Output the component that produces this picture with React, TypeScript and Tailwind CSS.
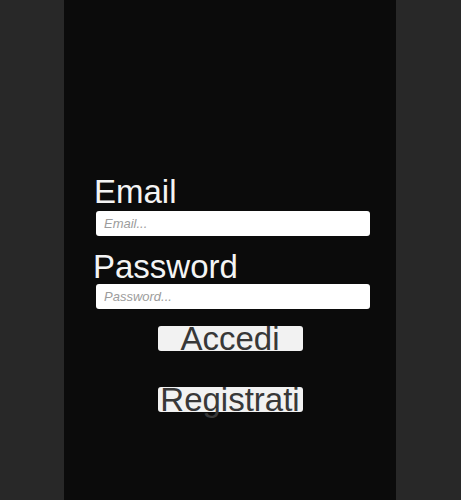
export default function App() {
  return (
    <div className="flex h-[500px] w-full bg-[#282828] font-['Liberation_Sans',Arial,sans-serif]">
      <div className="ml-[64px] flex h-full w-[332px] flex-col bg-[#0b0b0b] pt-[175px]">
        <label className="ml-[30px] text-[33px] leading-[33px] text-[#f4f4f4]">Email</label>
        <input
          type="text"
          placeholder="Email..."
          className="ml-[32px] mt-[3px] h-[25px] w-[274px] rounded-[3px] bg-white px-[8px] text-[13px] text-[#333] outline-none placeholder:italic placeholder:text-[#9c9c9c]"
        />
        <label className="ml-[29px] mt-[14px] text-[33px] leading-[33px] text-[#f4f4f4]">Password</label>
        <input
          type="password"
          placeholder="Password..."
          className="ml-[32px] mt-[1px] h-[25px] w-[274px] rounded-[3px] bg-white px-[8px] text-[13px] text-[#333] outline-none placeholder:italic placeholder:text-[#9c9c9c]"
        />
        <div className="mt-[17px] flex flex-col items-center gap-[36px]">
          <button className="flex h-[25px] w-[145px] items-start justify-center overflow-visible rounded-[3px] bg-[#f2f2f2] text-[33px] leading-[25px] whitespace-nowrap text-[#383838]">
            Accedi
          </button>
          <button className="flex h-[25px] w-[145px] items-start justify-center overflow-visible rounded-[3px] bg-[#f2f2f2] text-[33px] leading-[25px] whitespace-nowrap text-[#383838]">
            Registrati
          </button>
        </div>
      </div>
    </div>
  );
}
